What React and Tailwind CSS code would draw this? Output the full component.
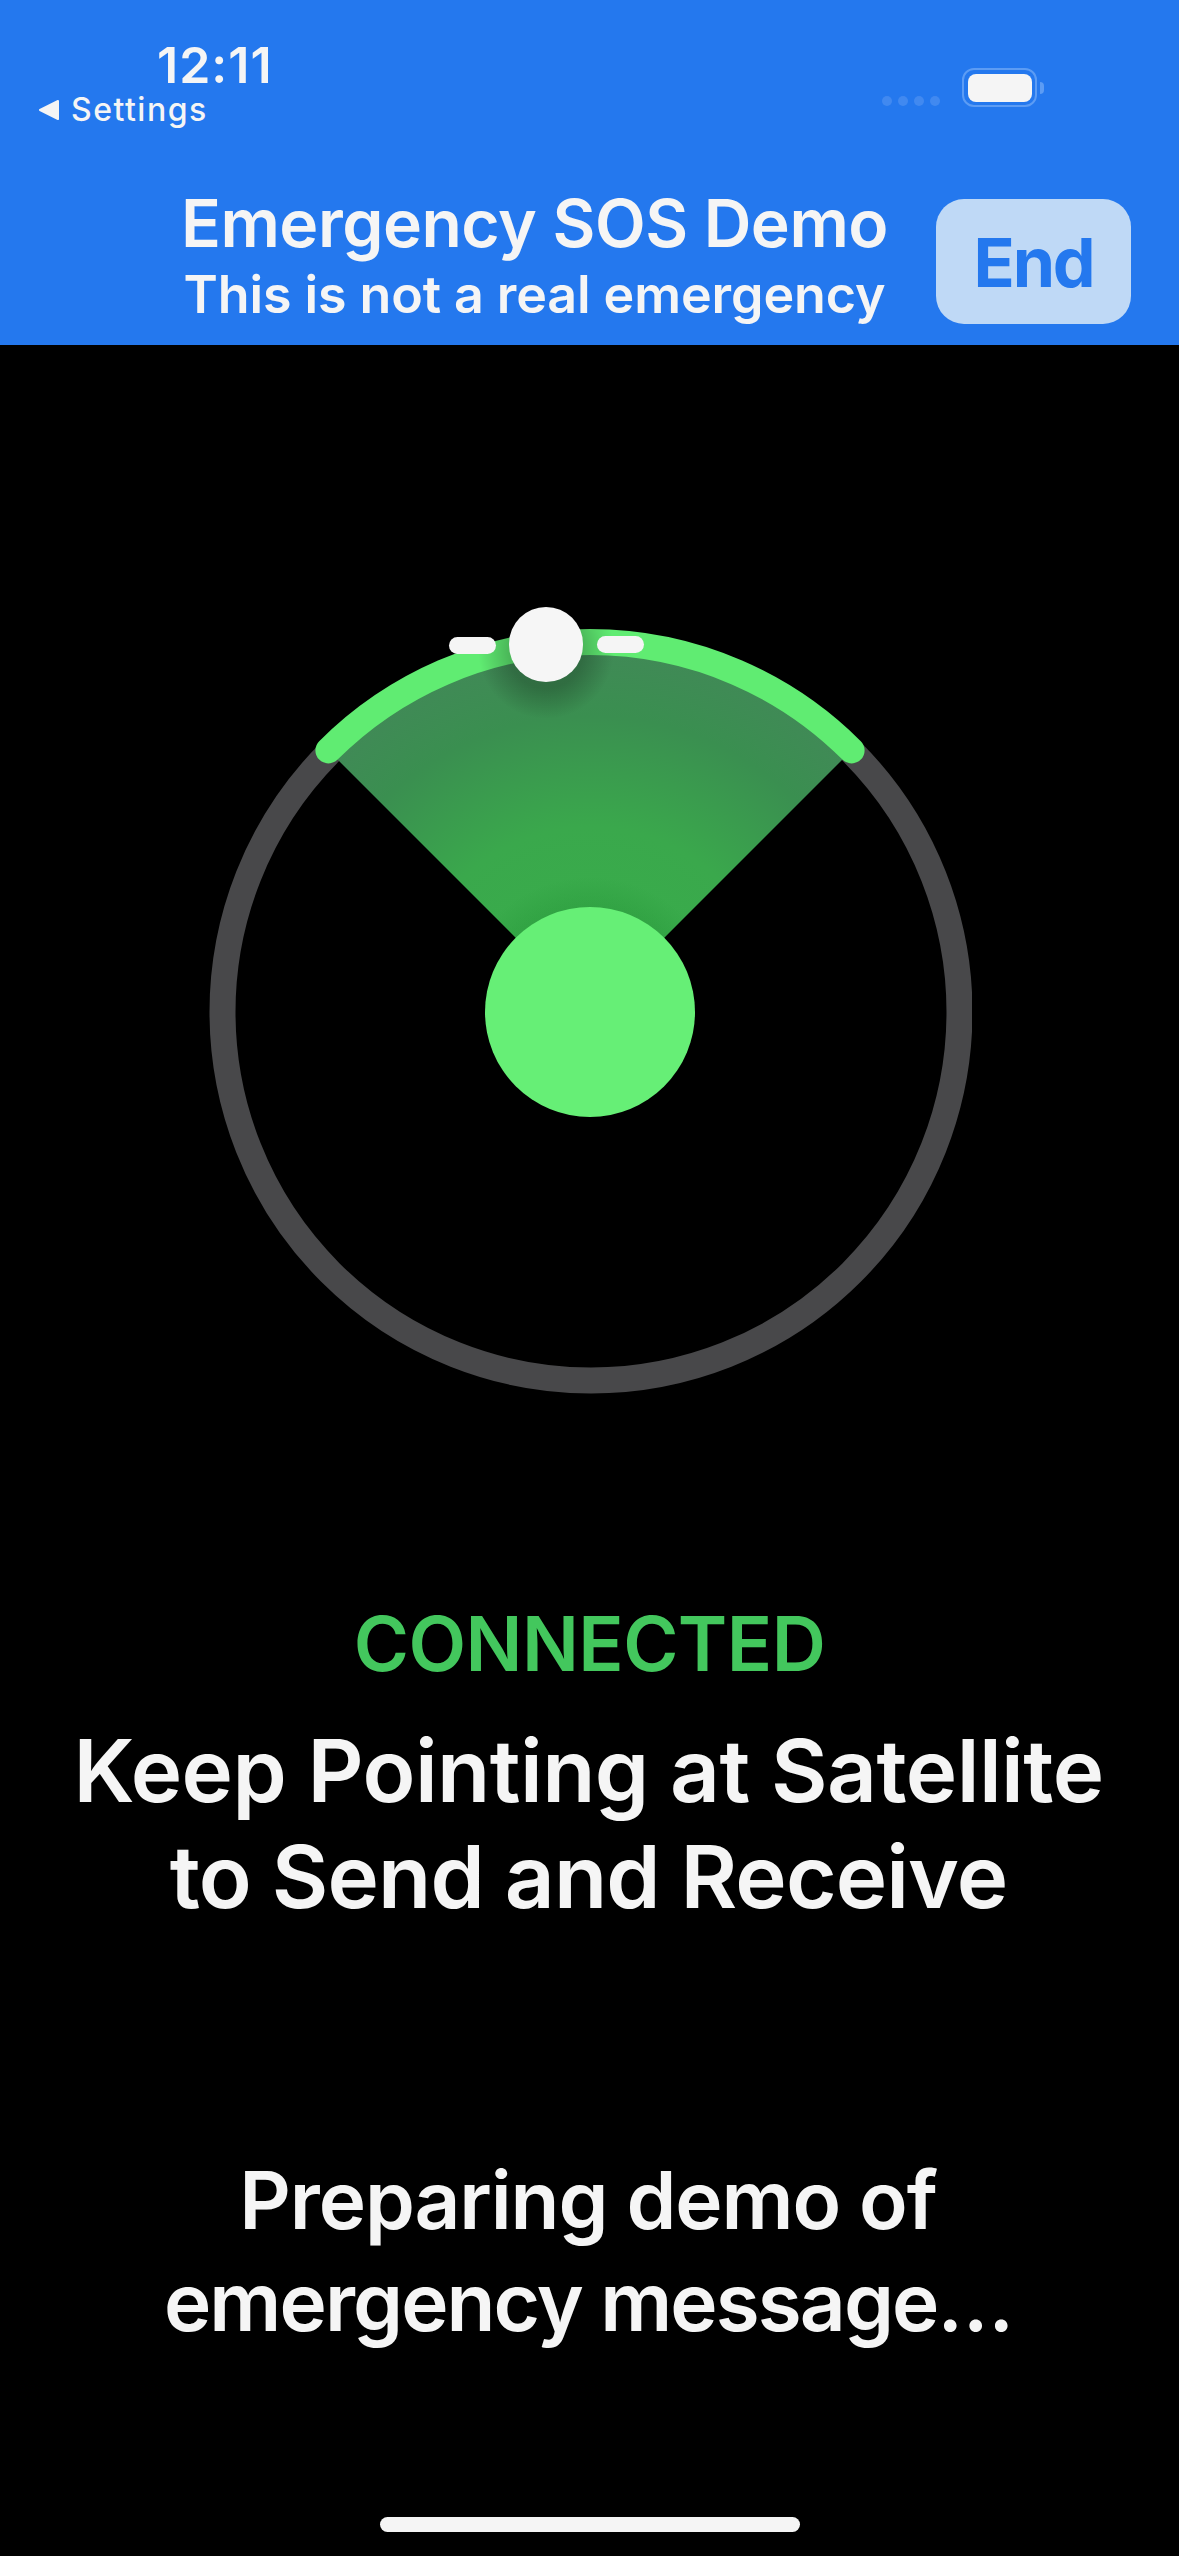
const FONT = "font-['Inter','Noto_Sans',sans-serif]";

function Dial() {
  return (
    <div className="relative w-[764px] h-[800px]">
      <svg className="absolute left-0 top-0" width="764" height="800" viewBox="0 0 764 800">
        <defs>
          <radialGradient id="sector" gradientUnits="userSpaceOnUse" cx="382" cy="405" r="370">
            <stop offset="0" stopColor="#37b149" />
            <stop offset="0.5" stopColor="#3aa84c" />
            <stop offset="0.8" stopColor="#3a8f50" />
            <stop offset="1" stopColor="#418957" />
          </radialGradient>
          <radialGradient id="knobShadow" gradientUnits="userSpaceOnUse" cx="338" cy="44" r="68">
            <stop offset="0.55" stopColor="#000" stopOpacity="0.22" />
            <stop offset="1" stopColor="#000" stopOpacity="0" />
          </radialGradient>
          <radialGradient id="hubShadow" gradientUnits="userSpaceOnUse" cx="382" cy="405" r="135">
            <stop offset="0.78" stopColor="#1e8a30" stopOpacity="0.25" />
            <stop offset="1" stopColor="#1e8a30" stopOpacity="0" />
          </radialGradient>
          <clipPath id="sectorClip">
            <path d="M382 405 L120.4 143.4 A370 370 0 0 1 643.6 143.4 Z" />
          </clipPath>
          <clipPath id="shadowClip">
            <path d="M382 405 L111 134 A383 383 0 0 1 653 134 Z" />
          </clipPath>
        </defs>
        <circle cx="383" cy="405" r="368.5" fill="none" stroke="#48484a" strokeWidth="26" />
        <path d="M382 405 L120.4 143.4 A370 370 0 0 1 643.6 143.4 Z" fill="url(#sector)" />
        <g clipPath="url(#sectorClip)">
          <circle cx="382" cy="405" r="135" fill="url(#hubShadow)" />
        </g>
        <path d="M120.4 143.4 A370 370 0 0 1 643.6 143.4" fill="none" stroke="#60ec72" strokeWidth="26" strokeLinecap="round" />
        <g clipPath="url(#shadowClip)">
          <circle cx="338" cy="44" r="68" fill="url(#knobShadow)" />
        </g>
        <circle cx="382" cy="405" r="105" fill="#66ef76" />
      </svg>
      <div className="absolute left-[241px] top-[29.5px] w-[47px] h-[17px] rounded-full bg-[#f5f5f5]" />
      <div className="absolute left-[389px] top-[28.5px] w-[47px] h-[17px] rounded-full bg-[#f5f5f5]" />
      <div className="absolute left-[301px] top-0 w-[74px] h-[75px] rounded-full bg-[radial-gradient(circle,#f6f6f6_72%,#ebebeb_100%)]" />
    </div>
  );
}

export default function App() {
  return (
    <div className={`w-[1179px] h-[2556px] bg-black flex flex-col overflow-hidden text-[#f5f5f5] ${FONT}`}>
      <header className="h-[345px] shrink-0 bg-[#2478ee] relative">
        <div className="flex justify-between">
          <div className="pl-[38px] pt-[36px]">
            <div className="pl-[119px] text-[50px] leading-[58px] font-semibold tracking-[1px]">12:11</div>
            <div className="flex items-center gap-[11px] text-[32px] leading-[38px] mt-[-3px] tracking-[1.5px] font-medium">
              <svg width="22" height="22" viewBox="0 0 22 22"><path d="M20 2 L2 11 L20 20 Z" fill="#f5f5f5" stroke="#f5f5f5" strokeWidth="2" strokeLinejoin="round" /></svg>
              <span>Settings</span>
            </div>
          </div>
          <div className="flex items-start pr-[135px] pt-[68px]">
            <div className="flex gap-[6px] mt-[28px] mr-[22px]">
              <div className="w-[10px] h-[10px] rounded-full bg-[#4189f0]" />
              <div className="w-[10px] h-[10px] rounded-full bg-[#4189f0]" />
              <div className="w-[10px] h-[10px] rounded-full bg-[#4189f0]" />
              <div className="w-[10px] h-[10px] rounded-full bg-[#4189f0]" />
            </div>
            <div className="w-[75px] h-[39px] rounded-[12px] border-[2px] border-[#5c9cf4] p-[3.5px]">
              <div className="w-full h-full rounded-[8px] bg-[#f5f5f5]" />
            </div>
            <div className="w-[4px] h-[12px] mt-[14px] ml-[3px] rounded-r-full bg-[#5c9cf4]" />
          </div>
        </div>
        <div className="absolute left-0 top-[189px] w-[1069px] text-center">
          <div className="text-[66px] leading-[68px] font-semibold tracking-[-0.5px]">Emergency SOS Demo</div>
          <div className="mt-[8px] text-[52px] leading-[60px] font-semibold tracking-[-0.1px]">This is not a real emergency</div>
        </div>
        <div className="absolute left-[936px] top-[199px] w-[195px] h-[125px] rounded-[28px] bg-[#bfd9f6] flex items-center justify-center text-[#2478ee] text-[68px] tracking-[-2.2px] font-bold">End</div>
      </header>
      <main className="flex-1 flex flex-col items-center relative">
        <div className="mt-[262px]"><Dial /></div>
        <div className="mt-[197px] text-[#43c75d] text-[75px] leading-[80px] font-semibold tracking-[-0.55px]">CONNECTED</div>
        <div className="mt-[34px] mr-[2px] text-center text-[87px] leading-[106px] font-semibold">
          <div className="tracking-[-0.55px]">Keep Pointing at Satellite</div>
          <div className="tracking-[-0.9px]">to Send and Receive</div>
        </div>
        <div className="mt-[219px] mr-[3px] text-center text-[80px] leading-[102px] font-semibold">
          <div className="tracking-[-1.1px]">Preparing demo of</div>
          <div className="tracking-[-1.9px]">emergency message…</div>
        </div>
        <div className="absolute left-[380px] top-[2172px] w-[420px] h-[15px] rounded-full bg-[#f5f5f5]" />
      </main>
    </div>
  );
}
